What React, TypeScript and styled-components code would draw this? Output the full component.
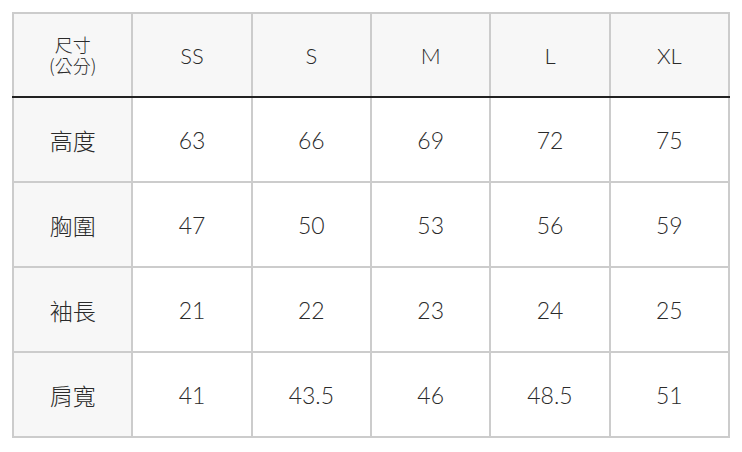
import React, { FC } from 'react';
import styled, { createGlobalStyle } from 'styled-components';

const GlobalStyle = createGlobalStyle`
  body {
    margin: 12px;
    background: #ffffff;
    font-family: Lato, 'Noto Sans CJK TC', sans-serif;
    color: #333333;
  }
`;

const Table = styled.table`
  width: 100%;
  border-collapse: collapse;
  table-layout: fixed;
  border: 2px solid #cccccc;
`;

const HeadCell = styled.th`
  height: 82px;
  padding: 0;
  background: #f7f7f7;
  border: 2px solid #cccccc;
  border-bottom: 2px solid #222222;
  font-weight: 300;
  font-size: 22px;
  color: #2a2a2a;
  text-align: center;
  vertical-align: middle;
`;

const CornerLine = styled.div`
  font-family: 'Noto Sans CJK TC', sans-serif;
  font-weight: 300;
  font-size: 18px;
  line-height: 21px;
  height: 21px;
`;

const Cell = styled.td<{ $label?: boolean }>`
  height: 83px;
  padding: 0;
  border: 2px solid #cccccc;
  background: ${(p) => (p.$label ? '#f7f7f7' : '#ffffff')};
  font-family: ${(p) => (p.$label ? "'Noto Sans CJK TC', sans-serif" : "Lato, sans-serif")};
  font-weight: 300;
  font-size: 23px;
  color: #2a2a2a;
  text-align: center;
  vertical-align: middle;
`;

const sizes = ['SS', 'S', 'M', 'L', 'XL'];

const rows: { label: string; values: string[] }[] = [
  { label: '高度', values: ['63', '66', '69', '72', '75'] },
  { label: '胸圍', values: ['47', '50', '53', '56', '59'] },
  { label: '袖長', values: ['21', '22', '23', '24', '25'] },
  { label: '肩寬', values: ['41', '43.5', '46', '48.5', '51'] },
];

const App: FC = () => {
  return (
    <>
      <GlobalStyle />
      <Table>
        <thead>
          <tr>
            <HeadCell>
              <CornerLine>尺寸</CornerLine>
              <CornerLine>(公分)</CornerLine>
            </HeadCell>
            {sizes.map((s) => (
              <HeadCell key={s}>{s}</HeadCell>
            ))}
          </tr>
        </thead>
        <tbody>
          {rows.map((row) => (
            <tr key={row.label}>
              <Cell $label>{row.label}</Cell>
              {row.values.map((v, i) => (
                <Cell key={i}>{v}</Cell>
              ))}
            </tr>
          ))}
        </tbody>
      </Table>
    </>
  );
};

export default App;
